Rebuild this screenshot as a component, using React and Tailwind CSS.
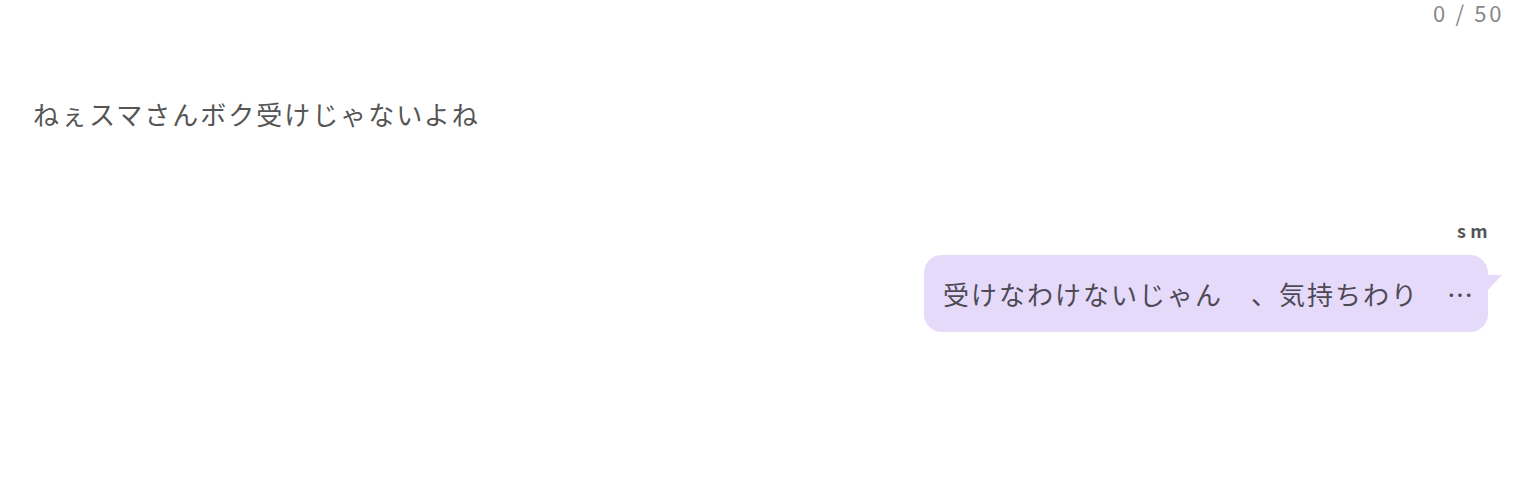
import React from 'react';

const JP = "font-['Noto_Sans_CJK_JP','Noto_Sans',sans-serif]";

export default function App() {
  return (
    <div className={`w-full h-[478px] bg-white ${JP} text-[#555]`}>
      <div className="flex justify-end pr-[32px] pt-[1px]">
        <span className="text-[22px] leading-[22px] tracking-[0.12em] text-[#888]">0 / 50</span>
      </div>

      <div className="pl-[33px] pt-[73px]">
        <p className="text-[26px] leading-[36px] tracking-[2px] text-[#555]">ねぇスマさんボク受けじゃないよね</p>
      </div>

      <div className="flex flex-col items-end pr-[48px] pt-[87px]">
        <span className="text-[18px] leading-[22px] font-bold tracking-[0.24em] text-[#555] mr-[-4px]">sm</span>
        <div className="relative mt-[14px]">
          <div className="bg-[#e6dafb] rounded-[18px] pl-[19px] pr-[13px] py-[18px]">
            <p className="text-[26px] leading-[41px] tracking-[2px] text-[#4d4a55] whitespace-pre">受けなわけないじゃん　、気持ちわり　…</p>
          </div>
          <svg className="absolute top-[20px] right-[-14px]" width="15" height="16" viewBox="0 0 15 16">
            <path d="M0 0 L15 0 L0 16 Z" fill="#e6dafb" />
          </svg>
        </div>
      </div>
    </div>
  );
}
